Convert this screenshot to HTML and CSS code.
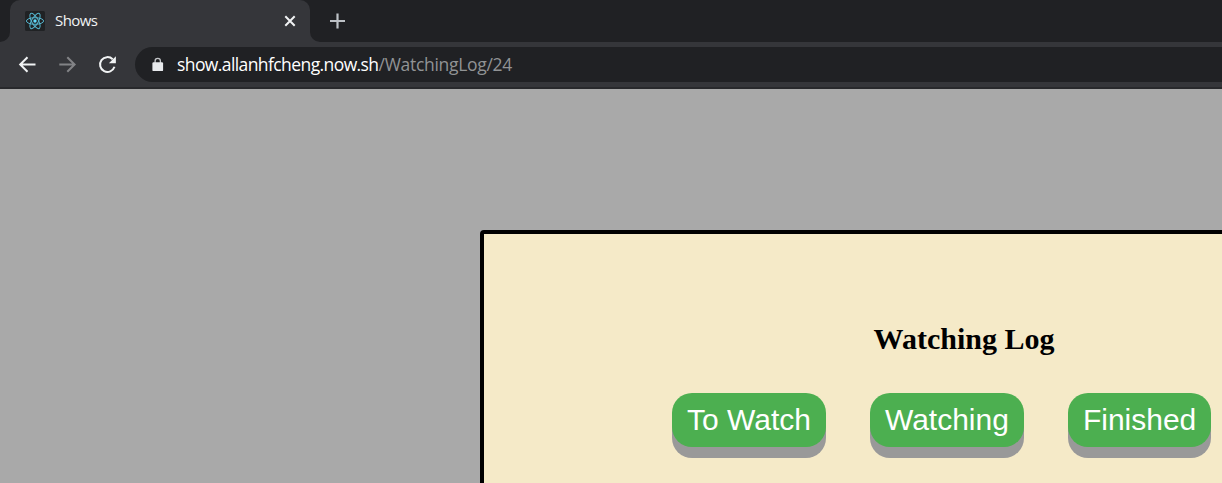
FILE: index.html
```
<!DOCTYPE html>
<html lang="en">
<head>
<meta charset="utf-8">
<title>Shows</title>
<link rel="stylesheet" href="styles.css">
</head>
<body>
<div class="browser">
  <header class="tab-strip">
    <svg class="curve" width="10" height="10" viewBox="0 0 10 10"><path d="M10 0v10H0A10 10 0 0 0 10 0Z" fill="#35363a"/></svg>
    <div class="tab">
      <svg class="favicon" width="20" height="20" viewBox="0 0 20 20">
        <rect width="20" height="20" rx="1.5" fill="#202224"/>
        <g fill="none" stroke="#55b5ce" stroke-width="1">
          <ellipse cx="10" cy="10" rx="8.6" ry="3.3"/>
          <ellipse cx="10" cy="10" rx="8.6" ry="3.3" transform="rotate(60 10 10)"/>
          <ellipse cx="10" cy="10" rx="8.6" ry="3.3" transform="rotate(120 10 10)"/>
        </g>
        <circle cx="10" cy="10" r="1.7" fill="#61dafb"/>
      </svg>
      <span class="tab-title">Shows</span>
      <svg class="close" width="12" height="12" viewBox="0 0 12 12"><path d="M1.3 1.3l9.4 9.4M10.7 1.3L1.3 10.7" stroke="#f1f3f4" stroke-width="2"/></svg>
    </div>
    <svg class="curve" width="10" height="10" viewBox="0 0 10 10"><path d="M0 0v10H10A10 10 0 0 1 0 0Z" fill="#35363a"/></svg>
    <svg class="new-tab" width="16" height="16" viewBox="0 0 16 16"><path d="M8.5 .5v15M1 8h15" stroke="#bdc1c6" stroke-width="2.2"/></svg>
  </header>
  <nav class="toolbar">
    <svg class="nav-icon" width="20" height="20" viewBox="0 .5 20 20"><path d="M18.5 10H3.7M10.5 2.7L3.2 10l7.3 7.3" fill="none" stroke="#f1f3f4" stroke-width="2"/></svg>
    <svg class="nav-icon" width="20" height="20" viewBox="0 .5 20 20"><path d="M2.3 10h14.8M10.3 2.7l7.3 7.3-7.3 7.3" fill="none" stroke="#828386" stroke-width="2"/></svg>
    <svg class="nav-icon" width="20" height="20" viewBox="0 .5 20 20"><path d="M17.5 12.3A7.4 7.4 0 1 1 15.7 4.8" fill="none" stroke="#f1f3f4" stroke-width="2"/><path d="M18.9 1.8v7h-7Z" fill="#f1f3f4"/></svg>
    <div class="omnibox">
      <svg class="lock" width="12" height="15" viewBox="0 0 12 15"><path d="M3.1 6V4a2.65 2.65 0 0 1 5.3 0V6" fill="none" stroke="#c4c6c9" stroke-width="1.3"/><rect x=".4" y="5.2" width="10.7" height="8.9" rx="1.2" fill="#e8eaed"/></svg>
      <span class="host">show.allanhfcheng.now.sh</span><span class="path">/WatchingLog/24</span>
    </div>
  </nav>
  <main class="page">
    <section class="card">
      <h1>Watching Log</h1>
      <div class="actions">
        <button class="action">To Watch</button>
        <button class="action">Watching</button>
        <button class="action">Finished</button>
      </div>
    </section>
  </main>
</div>
</body>
</html>
```
FILE: styles.css
```
* { box-sizing: border-box; }
body { margin: 0; overflow: hidden; }
svg { display: block; flex: none; }
.browser { height: 483px; display: flex; flex-direction: column; overflow: hidden; background: #a9a9a9; }
.tab-strip { height: 42px; flex: none; display: flex; align-items: flex-end; background: #202124; }
.tab { width: 300px; height: 42px; display: flex; align-items: center; padding: 0 14px 0 15px; background: #35363a; border-radius: 10px 10px 0 0; }
.tab-title { flex: 1; margin-left: 10px; padding-bottom: 2px; font: 15px/20px "Open Sans", sans-serif; letter-spacing: -.6px; color: #f1f3f4; }
.new-tab { margin: 0 0 13px 9px; }
.toolbar { height: 47px; flex: none; display: flex; align-items: center; padding: 0 0 0 17px; gap: 20px; background: #35363a; border-bottom: 2px solid #28292c; }
.omnibox { flex: 1; height: 35px; margin-left: -2px; display: flex; align-items: center; padding-left: 17px; background: #202124; border-radius: 18px 0 0 18px; font: 17.5px/24px "Open Sans", sans-serif; }
.lock { margin-right: 13px; }
.host { color: #fff; letter-spacing: -.59px; }
.path { color: #919395; letter-spacing: -.29px; }
.host, .path { padding-bottom: 2px; }
.page { flex: 1; padding: 141px 0 0 480px; }
.card { width: 968px; height: 500px; padding-top: 87px; background: #f5eac8; border: 4px solid #000; border-radius: 4px; }
h1 { margin: 0; text-align: center; font: bold 30px/36px "Liberation Serif", serif; }
.actions { display: flex; gap: 44px; margin: 36px 0 0 188px; }
.action { height: 54px; padding: 0 15px; border: 0; border-radius: 20px; background: #4caf50; color: #fff; box-shadow: 0 11px #999; font: 30px/34px "Liberation Sans", sans-serif; white-space: nowrap; }
```
